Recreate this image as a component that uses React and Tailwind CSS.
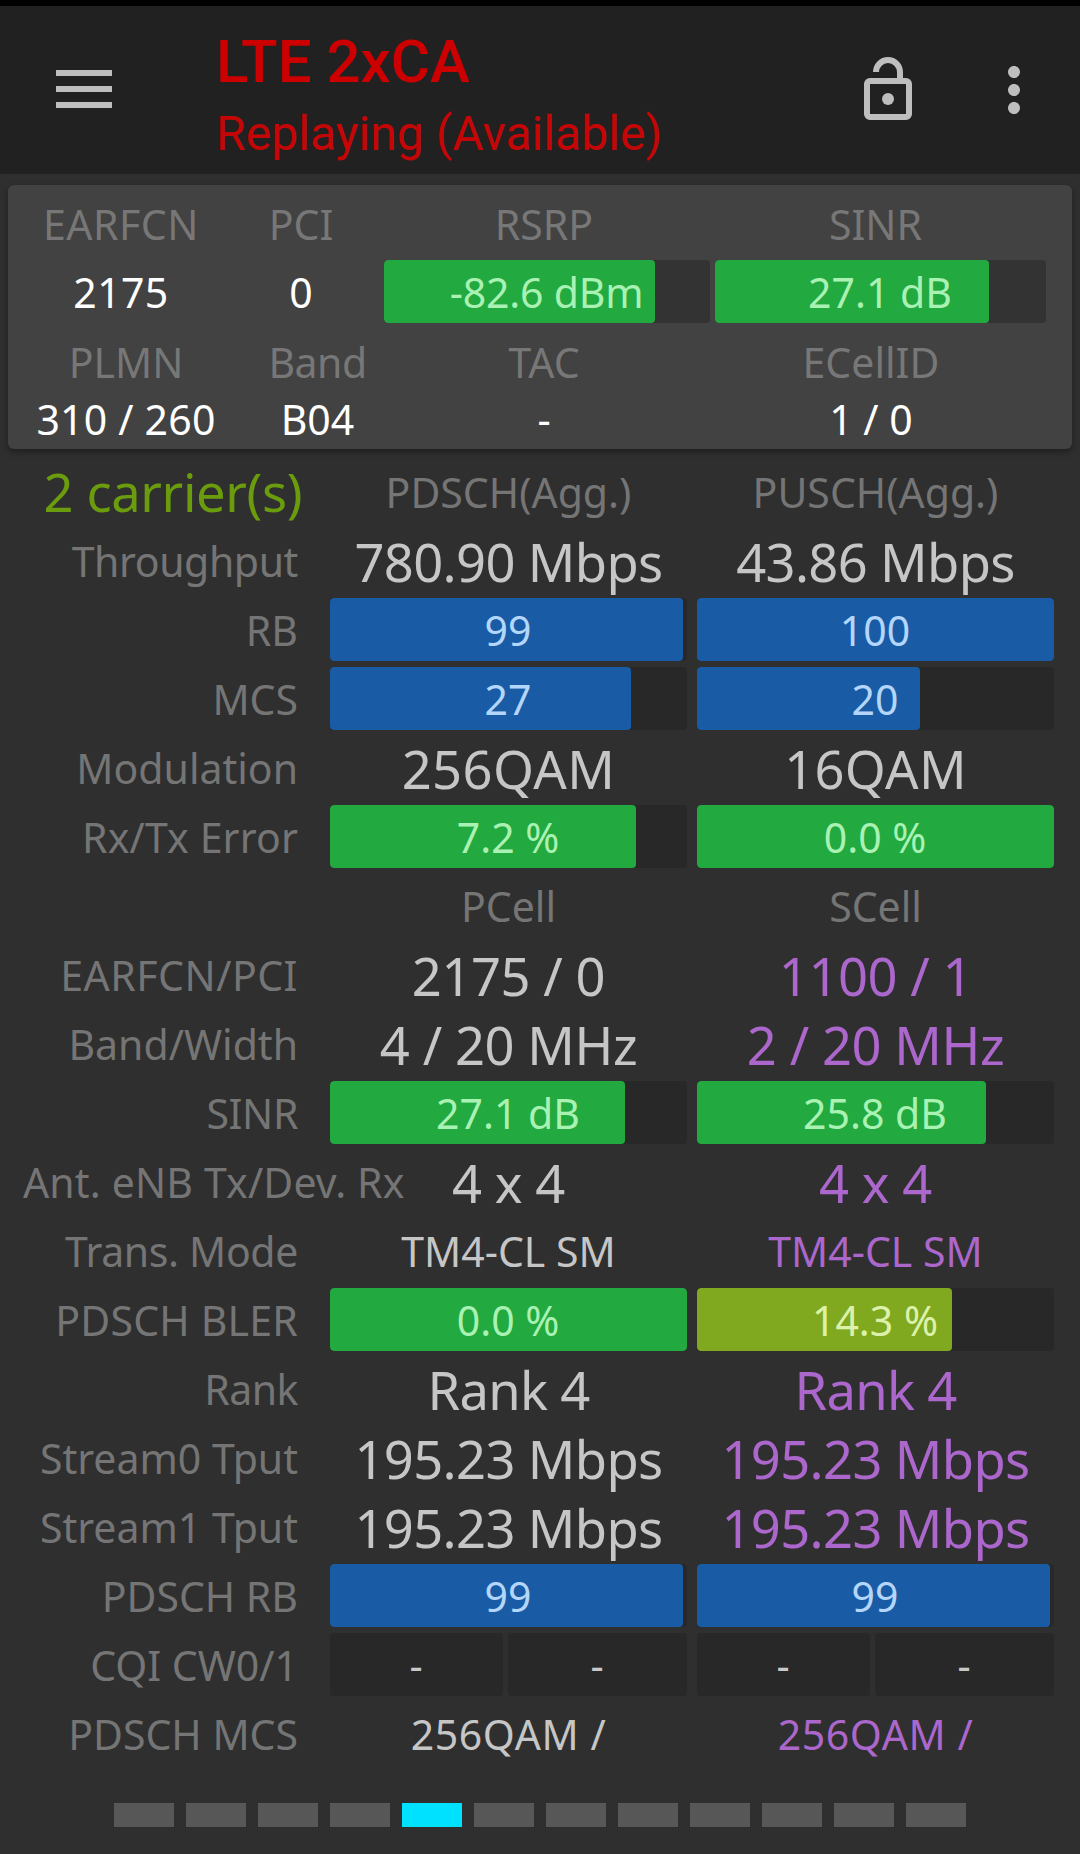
import { MdMoreVert } from 'react-icons/md';

const BAR_STYLES = {
    green: { fill: 'bg-[#22a93f]', text: 'text-[#a9f2b4]' },
    blue: { fill: 'bg-[#195ca5]', text: 'text-[#b3d6fa]' },
    olive: { fill: 'bg-[#81a91f]', text: 'text-[#dcf2ac]' },
    empty: { fill: '', text: 'text-[#c8c8c8]' }
};

const bar = (text, percent, color) => ({ type: 'bar', text, percent, color });
const big = (text, spacing = 'tracking-[-0.45px]') => ({ type: 'big', text, spacing });
const rate = (text) => big(text, 'tracking-[-0.65px]');
const small = (text, spacing = '') => ({ type: 'small', text, spacing });
const head = (text) => ({ type: 'head', text });
const pair = (first, second) => ({ type: 'pair', items: [first, second] });

const AGGREGATE_ROWS = [
    { label: 'Throughput', spacing: 'tracking-[-0.4px]', cells: [rate('780.90 Mbps'), rate('43.86 Mbps')] },
    { label: 'RB', cells: [bar('99', 99, 'blue'), bar('100', 100, 'blue')] },
    { label: 'MCS', cells: [bar('27', 84.4, 'blue'), bar('20', 62.5, 'blue')] },
    { label: 'Modulation', cells: [big('256QAM', 'tracking-[0.4px]'), big('16QAM', 'tracking-[0.3px]')] },
    { label: 'Rx/Tx Error', spacing: 'tracking-[0.15px]', cells: [bar('7.2 %', 85.7, 'green'), bar('0.0 %', 100, 'green')] }
];

const CELL_ROWS = [
    { label: '', cells: [head('PCell'), head('SCell')] },
    { label: 'EARFCN/PCI', spacing: 'tracking-[0.5px]', cells: [big('2175 / 0'), big('1100 / 1')] },
    { label: 'Band/Width', cells: [big('4 / 20 MHz'), big('2 / 20 MHz')] },
    { label: 'SINR', spacing: 'tracking-[-0.4px]', cells: [bar('27.1 dB', 82.7, 'green'), bar('25.8 dB', 81, 'green')] },
    { label: 'Ant. eNB Tx/Dev. Rx', spacing: 'tracking-[0.15px] pl-px', cells: [big('4 x 4'), big('4 x 4')] },
    { label: 'Trans. Mode', spacing: 'tracking-[-0.35px]', cells: [small('TM4-CL SM'), small('TM4-CL SM')] },
    { label: 'PDSCH BLER', spacing: 'tracking-[0.2px]', cells: [bar('0.0 %', 100, 'green'), bar('14.3 %', 71.4, 'olive')] },
    { label: 'Rank', spacing: 'tracking-[-0.5px]', cells: [big('Rank 4', 'tracking-[-0.7px]'), big('Rank 4', 'tracking-[-0.7px]')] },
    { label: 'Stream0 Tput', cells: [rate('195.23 Mbps'), rate('195.23 Mbps')] },
    { label: 'Stream1 Tput', cells: [rate('195.23 Mbps'), rate('195.23 Mbps')] },
    { label: 'PDSCH RB', cells: [bar('99', 99, 'blue'), bar('99', 99, 'blue')] },
    { label: 'CQI CW0/1', cells: [pair('-', '-'), pair('-', '-')] },
    { label: 'PDSCH MCS', cells: [small('256QAM /', 'tracking-[0.6px]'), small('256QAM /', 'tracking-[0.6px]')] }
];

const PAGE_COUNT = 12;
const ACTIVE_PAGE = 4;

const Bar = ({ text, percent, color, track = 'bg-[#282828]' }) => {
    const style = BAR_STYLES[color];
    return (
        <div className={`relative h-[63px] rounded-[4px] overflow-hidden ${track}`}>
            <div className={`h-full rounded-[4px] ${style.fill}`} style={{ width: `${percent}%` }}></div>
            <span className={`absolute inset-0 pr-px text-center ${style.text}`}>{text}</span>
        </div>
    );
};

const Cell = ({ cell, secondary }) => {
    const color = secondary ? 'text-[#ab67cb]' : 'text-[#c6c6c6]';

    if (cell.type === 'bar') {
        return <Bar {...cell} />;
    }
    if (cell.type === 'pair') {
        return (
            <div className="grid grid-cols-[173px_179px] gap-[5px]">
                {cell.items.map((item, i) => (
                    <Bar key={i} text={item} percent={0} color="empty" />
                ))}
            </div>
        );
    }
    if (cell.type === 'head') {
        return <div className="text-center text-[#757575]">{cell.text}</div>;
    }
    return (
        <div className={`text-center ${color} ${cell.spacing} ${cell.type === 'big' ? 'text-[52.5px]' : ''}`}>
            {cell.text}
        </div>
    );
};

const Row = ({ label, spacing = '', cells, secondary }) => (
    <div className="grid grid-cols-[276px_357px_357px] h-[63px]">
        <div className={`text-right text-[#757575] ${spacing}`}>{label}</div>
        <div className="ml-8 -mr-8">
            <Cell cell={cells[0]} />
        </div>
        <div className="ml-[42px] -mr-[42px]">
            <Cell cell={cells[1]} secondary={secondary} />
        </div>
    </div>
);

const Header = () => (
    <header className="h-[174px] bg-[#212121] border-t-[6px] border-black flex items-start font-[Roboto,sans-serif]">
        <div className="ml-14 mt-16 w-14 flex flex-col gap-[10px]">
            <div className="h-[6px] bg-[#bebebe]"></div>
            <div className="h-[6px] bg-[#bebebe]"></div>
            <div className="h-[6px] bg-[#bebebe]"></div>
        </div>
        <div className="ml-[104px] mt-[21px] flex-1 text-[#cc0000]">
            <h1 className="text-[60px] leading-[70px] font-medium">LTE 2xCA</h1>
            <p className="mt-[9px] text-[48px] leading-[56px] tracking-[0.06px] text-[#c40606]">Replaying (Available)</p>
        </div>
        <div className="mt-12 mr-[30px] flex gap-[54px] text-[#bebebe]">
            <svg viewBox="0 0 24 24" className="w-[72px] h-[72px]" fill="none" stroke="currentColor" strokeWidth="2">
                <rect x="5" y="9" width="14" height="12" rx="1" />
                <path d="M8 6a4 4 0 0 1 8 0v3" />
                <circle cx="12" cy="15" r="2" fill="currentColor" stroke="none" />
            </svg>
            <MdMoreVert className="w-[72px] h-[72px]" />
        </div>
    </header>
);

const ServingCell = () => (
    <section className="mx-2 mt-[11px] h-[264px] rounded-[6px] bg-[#424242] shadow-[0_3px_6px_rgba(0,0,0,0.35)] pl-3 text-white text-center">
        <div className="grid grid-cols-[202px_158px_328px_335px] pt-[7px] h-[75px] text-[#777777]">
            <div className="tracking-[0.5px]">EARFCN</div>
            <div>PCI</div>
            <div>RSRP</div>
            <div>SINR</div>
        </div>
        <div className="grid grid-cols-[202px_158px_326px_331px] h-[63px]">
            <div className="tracking-[0.4px]">2175</div>
            <div>0</div>
            <div className="ml-1 -mr-1 tracking-[-0.2px]">
                <Bar text="-82.6 dBm" percent={83.1} color="green" track="bg-[#333333]" />
            </div>
            <div className="ml-[9px] -mr-[9px]">
                <Bar text="27.1 dB" percent={82.8} color="green" track="bg-[#333333]" />
            </div>
        </div>
        <div className="grid grid-cols-[212px_171px_282px_372px] pt-[7px] h-[65px] text-[#777777]">
            <div>PLMN</div>
            <div className="tracking-[-0.5px]">Band</div>
            <div>TAC</div>
            <div>ECellID</div>
        </div>
        <div className="grid grid-cols-[212px_171px_282px_372px] h-[61px] leading-[62px]">
            <div className="tracking-[0.2px]">310 / 260</div>
            <div>B04</div>
            <div>-</div>
            <div>1 / 0</div>
        </div>
    </section>
);

const App = () => {
    return (
        <div className="w-[1080px] h-[1854px] overflow-hidden bg-[#2f2f2f] font-['Noto_Sans',sans-serif] text-[41px] leading-[65px] whitespace-nowrap">
            <Header />
            <ServingCell />

            <main className="mt-[11px] ml-[22px] flex flex-col gap-[6px]">
                <div className="grid grid-cols-[276px_357px_357px] h-[63px] text-[#757575]">
                    <div className="-mr-1 text-right text-[52.5px] leading-[63px] tracking-[-0.4px] text-[#6a9c0e]">2 carrier(s)</div>
                    <div className="ml-8 -mr-8 text-center">PDSCH(Agg.)</div>
                    <div className="ml-[42px] -mr-[42px] text-center">PUSCH(Agg.)</div>
                </div>
                {AGGREGATE_ROWS.map((row) => (
                    <Row key={row.label} {...row} />
                ))}
                {CELL_ROWS.map((row) => (
                    <Row key={row.label} {...row} secondary />
                ))}
            </main>

            {/* Page indicator */}
            <div className="mt-[38px] flex justify-center gap-3">
                {Array.from({ length: PAGE_COUNT }, (_, i) => (
                    <div key={i} className={`w-[60px] h-6 ${i === ACTIVE_PAGE ? 'bg-[#00e0ff]' : 'bg-[#575757]'}`}></div>
                ))}
            </div>
        </div>
    );
};

export default App;
